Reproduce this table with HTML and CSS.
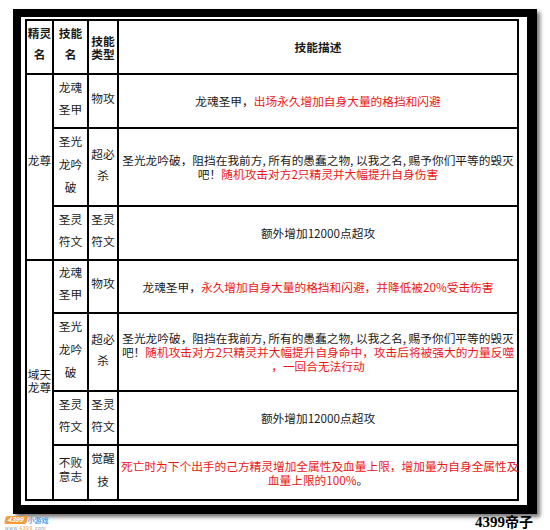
FILE: index.html
```html
<!DOCTYPE html>
<html lang="zh-CN">
<head>
<meta charset="utf-8">
<title>精灵技能</title>
<link rel="stylesheet" href="styles.css">
</head>
<body>
<div class="page">
  <div class="frame">
    <table class="skills">
      <colgroup>
        <col class="c1"><col class="c2"><col class="c3"><col class="c4">
      </colgroup>
      <tr class="r54">
        <th class="nm head-nm">精灵<br>名</th>
        <th class="nm head-nm">技能<br>名</th>
        <th class="nm head-type">技能<br>类型</th>
        <th class="desc head-desc">技能描述</th>
      </tr>
      <tr class="r54">
        <td rowspan="3" class="pet pet-1">龙尊</td>
        <td class="nm">龙魂<br>圣甲</td>
        <td class="nm">物攻</td>
        <td class="desc">龙魂圣甲，<span class="red">出场永久增加自身大量的格挡和闪避</span></td>
      </tr>
      <tr class="r77">
        <td class="nm lh23">圣光<br>龙吟<br>破</td>
        <td class="nm lh21">超必<br>杀</td>
        <td class="desc">圣光龙吟破，阻挡在我前方, 所有的愚蠢之物, 以我之名, 赐予你们平等的毁灭<br>吧！<span class="red">随机攻击对方2只精灵并大幅提升自身伤害</span></td>
      </tr>
      <tr class="r54">
        <td class="nm">圣灵<br>符文</td>
        <td class="nm">圣灵<br>符文</td>
        <td class="desc">额外增加12000点超攻</td>
      </tr>
      <tr class="r53">
        <td rowspan="4" class="pet pet-2">域天<br>龙尊</td>
        <td class="nm">龙魂<br>圣甲</td>
        <td class="nm">物攻</td>
        <td class="desc">龙魂圣甲，<span class="red">永久增加自身大量的格挡和闪避，并降低被20%受击伤害</span></td>
      </tr>
      <tr class="r77">
        <td class="nm lh23">圣光<br>龙吟<br>破</td>
        <td class="nm lh21">超必<br>杀</td>
        <td class="desc">圣光龙吟破，阻挡在我前方, 所有的愚蠢之物, 以我之名, 赐予你们平等的毁灭<br>吧！<span class="red">随机攻击对方2只精灵并大幅提升自身命中，攻击后将被强大的力量反噬<br>，一回合无法行动</span></td>
      </tr>
      <tr class="r54">
        <td class="nm">圣灵<br>符文</td>
        <td class="nm">圣灵<br>符文</td>
        <td class="desc">额外增加12000点超攻</td>
      </tr>
      <tr class="r54">
        <td class="nm lh14">不败<br>意志</td>
        <td class="nm lh23">觉醒<br>技</td>
        <td class="desc"><span class="red">死亡时为下个出手的己方精灵增加全属性及血量上限，增加量为自身全属性及<br>血量上限的100%</span>。</td>
      </tr>
    </table>
  </div>
  <div class="footer">
    <div class="logo">
      <div class="logo-top"><span class="logo-num">4399</span><span class="logo-word">小游戏</span></div>
      <div class="logo-url">www.<span class="logo-orange">4399</span>.com</div>
    </div>
    <div class="caption"><span class="cap-num">4399</span>帝子</div>
  </div>
</div>
</body>
</html>
```

FILE: styles.css
```css
html, body {
  margin: 0;
  padding: 0;
  background: #fff;
}

body {
  width: 550px;
  height: 530px;
  overflow: hidden;
  font-family: "Noto Sans CJK SC", "Noto Sans", sans-serif;
  color: #1a1a1a;
}

.page {
  padding: 9px 0 0 13px;
}

.frame {
  width: 494px;
  border-style: solid;
  border-color: #000;
  border-width: 8px 10px 9px 8px;
  padding: 2px 8px 4px 4px;
  background: #fff;
  box-shadow: 3px 3px 4px rgba(0, 0, 0, 0.55);
}

.skills {
  table-layout: fixed;
  width: 494px;
  border-collapse: separate;
  border-spacing: 0;
  border-left: 2px solid #000;
  border-top: 2px solid #000;
  font-size: 11.7px;
}

.c1 { width: 27px; }
.c2 { width: 35px; }
.c3 { width: 30px; }
.c4 { width: 400px; }

.skills th,
.skills td {
  border-right: 2px solid #000;
  border-bottom: 2px solid #000;
  padding: 0;
  text-align: center;
  vertical-align: middle;
  font-weight: normal;
  white-space: nowrap;
}

.r54 { height: 54px; }
.r53 { height: 53px; }
.r77 { height: 77px; }

.nm {
  line-height: 22px;
  padding-bottom: 7px !important;
}

.lh23 { line-height: 23px; }
.lh21 { line-height: 21px; }
.lh14 { line-height: 14px; }

.skills th {
  font-weight: bold;
}

.head-nm {
  line-height: 21px;
  padding-bottom: 9px !important;
}

.head-type {
  line-height: 13px;
  padding-bottom: 0 !important;
}

.head-desc {
  padding-bottom: 7px !important;
}

.pet {
  line-height: 13px;
}

.pet-1 {
  padding-bottom: 16px !important;
}

.desc {
  line-height: 14px;
  padding: 0 2px !important;
}

.red {
  color: #ee1515;
}

.footer {
  display: flex;
  justify-content: space-between;
  align-items: flex-start;
  width: 533px;
  margin-left: -13px;
}

.logo {
  margin: 2px 0 0 5px;
  display: flex;
  flex-direction: column;
  align-items: flex-start;
}

.logo-top {
  display: flex;
  align-items: center;
  height: 8px;
}

.logo-num {
  background: #f39a3a;
  color: #fff;
  font-family: "Liberation Sans", sans-serif;
  font-weight: bold;
  font-style: italic;
  font-size: 7px;
  line-height: 8px;
  padding: 0 3px;
  border-radius: 2px;
  transform: skewX(-12deg);
}

.logo-word {
  color: #5aa0e6;
  font-size: 7px;
  line-height: 8px;
  margin-left: 1px;
  font-weight: bold;
}

.logo-url {
  color: #9a9a9a;
  font-family: "Liberation Sans", sans-serif;
  font-size: 5px;
  line-height: 6px;
  letter-spacing: 0.6px;
  margin-top: 1px;
}

.logo-orange {
  color: #f39a3a;
}

.caption {
  margin-top: -1px;
  font-family: "Noto Sans CJK SC", sans-serif;
  font-weight: bold;
  font-size: 14px;
  line-height: 16px;
  color: #000;
}

.cap-num {
  font-family: "Liberation Serif", serif;
  font-size: 15px;
}
```
